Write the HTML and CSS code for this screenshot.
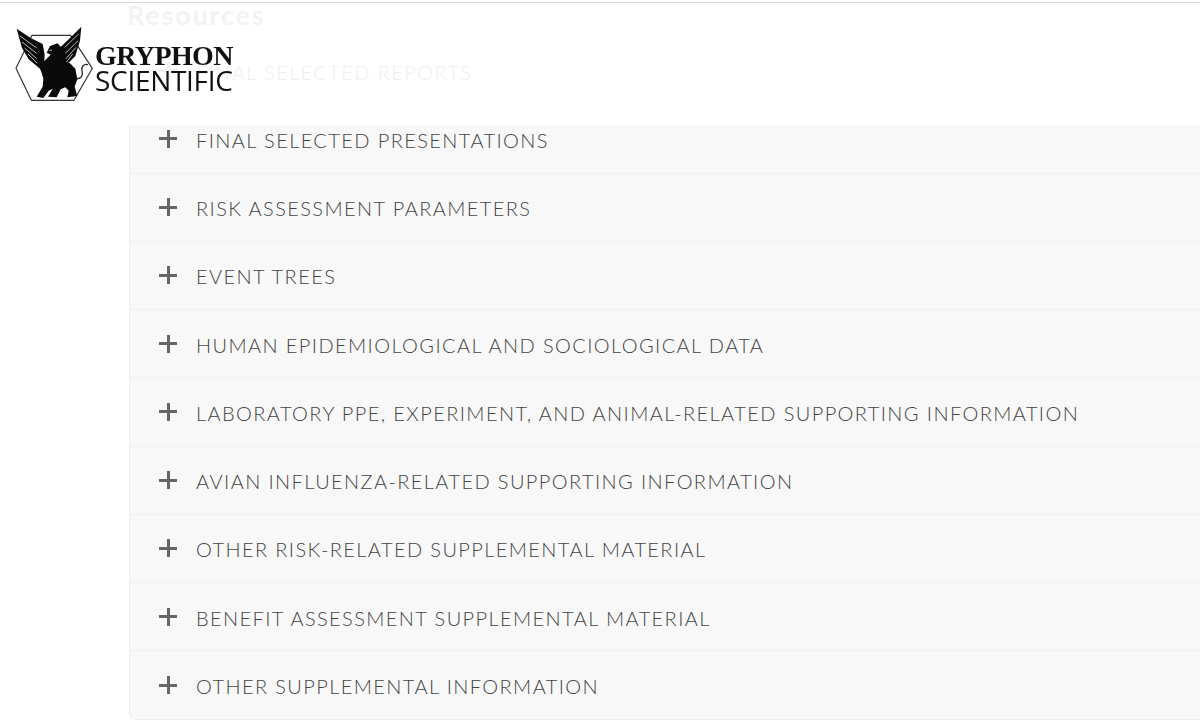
FILE: index.html
```html
<!DOCTYPE html>
<html lang="en">
<head>
<meta charset="utf-8">
<title>Resources</title>
<link rel="stylesheet" href="styles.css">
</head>
<body>
<div class="top-line"></div>
<main class="content">
  <h2 class="title">Resources</h2>
  <div class="accordion">
    <div class="row"><span class="plus"></span><span class="label">FINAL SELECTED REPORTS</span></div>
    <div class="row"><span class="plus"></span><span class="label">FINAL SELECTED PRESENTATIONS</span></div>
    <div class="row"><span class="plus"></span><span class="label">RISK ASSESSMENT PARAMETERS</span></div>
    <div class="row"><span class="plus"></span><span class="label">EVENT TREES</span></div>
    <div class="row"><span class="plus"></span><span class="label">HUMAN EPIDEMIOLOGICAL AND SOCIOLOGICAL DATA</span></div>
    <div class="row"><span class="plus"></span><span class="label">LABORATORY PPE, EXPERIMENT, AND ANIMAL-RELATED SUPPORTING INFORMATION</span></div>
    <div class="row"><span class="plus"></span><span class="label">AVIAN INFLUENZA-RELATED SUPPORTING INFORMATION</span></div>
    <div class="row"><span class="plus"></span><span class="label">OTHER RISK-RELATED SUPPLEMENTAL MATERIAL</span></div>
    <div class="row"><span class="plus"></span><span class="label">BENEFIT ASSESSMENT SUPPLEMENTAL MATERIAL</span></div>
    <div class="row"><span class="plus"></span><span class="label">OTHER SUPPLEMENTAL INFORMATION</span></div>
  </div>
</main>
<header class="site-header">
  <div class="logo">
    <svg class="logo-mark" viewBox="0 0 270 270" aria-hidden="true">
      <path class="hex" d="M18 145 L66 46 H182 L247 145 L192 241 H64 Z"/>
      <path class="ink" d="M20 26 L62 54 L98 72 L104 104 L100 172 L90 146 L56 118 L36 84 Z"/>
      <path class="ink" d="M214 20 L210 62 L196 108 L164 140 L146 130 L140 92 L180 54 Z"/>
      <path class="gap" d="M30 48 L80 84 M36 66 L80 100 M44 84 L80 116 M54 102 L82 130"/>
      <path class="gap" d="M206 42 L164 82 M204 62 L166 100 M198 82 L168 116 M188 102 L168 128"/>
      <path class="ink" d="M110 98 L120 78 L142 70 L156 84 L152 106 L156 122 L180 130 L196 146 L202 178 L194 200 L202 228 L172 232 L176 212 L166 202 L152 208 L140 232 L114 230 L128 206 L116 212 L100 234 L80 230 L98 200 L100 176 L94 150 L102 124 L122 104 Z"/>
      <path class="gap" d="M118 92 L126 90"/>
      <path class="tail" d="M198 176 C214 178 220 166 216 152 C213 140 222 130 234 134"/>
    </svg>
    <div class="wordmark">
      <span class="word-top">GRYPHON</span>
      <span class="word-bottom">SCIENTIFIC</span>
    </div>
  </div>
</header>
</body>
</html>
```
FILE: styles.css
```css
html, body {
  margin: 0;
  height: 720px;
  overflow: hidden;
  background: #fff;
}
body {
  position: relative;
  font-family: "Lato", "Open Sans", sans-serif;
  color: #666;
}
.top-line {
  height: 1px;
  margin-top: 2px;
  background: #d9d9d9;
}
.content {
  padding-left: 127px;
  margin-right: -12px;
}
.title {
  margin: 0;
  height: 33px;
  font-size: 27px;
  line-height: 24px;
  font-weight: 700;
  letter-spacing: 1.8px;
  color: #777;
}
.accordion {
  margin-left: 2px;
  background: #f8f8f8;
  border: 1px solid #efefef;
  border-radius: 7px;
  box-sizing: border-box;
  height: 684px;
}
.row {
  box-sizing: border-box;
  height: 68.25px;
  display: flex;
  align-items: center;
  gap: 20px;
  padding-left: 29px;
  border-bottom: 1px solid #f1f1f1;
}
.row:last-child {
  border-bottom: 0;
}
.plus {
  position: relative;
  width: 18px;
  height: 18px;
  flex: none;
  background:
    linear-gradient(#666, #666) center / 18px 3px no-repeat,
    linear-gradient(#666, #666) center / 3px 18px no-repeat;
}
.label {
  font-size: 20px;
  line-height: 24px;
  letter-spacing: 1.4px;
  font-weight: 300;
  position: relative;
  top: 1px;
  left: -1px;
  color: #444;
}
.site-header {
  position: absolute;
  top: 3px;
  left: 0;
  right: 0;
  height: 122px;
  background: rgba(255, 255, 255, .9);
}
.logo {
  display: flex;
  align-items: center;
  gap: 0;
  padding: 17px 0 0 10px;
}
.logo-mark {
  width: 90px;
  height: 90px;
  flex: none;
  margin-right: -5px;
  filter: blur(.35px);
}
.hex {
  fill: none;
  stroke: #333;
  stroke-width: 3.5;
  stroke-linejoin: round;
}
.ink {
  fill: #0a0a0a;
}
.gap {
  fill: none;
  stroke: #ddd;
  stroke-width: 2.5;
}
.tail {
  fill: none;
  stroke: #222;
  stroke-width: 4;
}
.wordmark {
  display: flex;
  flex-direction: column;
  color: #111;
  filter: blur(.3px);
  margin-top: 6px;
}
.word-top {
  font-family: "Liberation Serif", serif;
  font-weight: 700;
  font-size: 28px;
  line-height: 24px;
  letter-spacing: -.6px;
}
.word-bottom {
  font-family: "Open Sans", sans-serif;
  font-size: 28px;
  line-height: 25px;
  letter-spacing: -.3px;
}
```
